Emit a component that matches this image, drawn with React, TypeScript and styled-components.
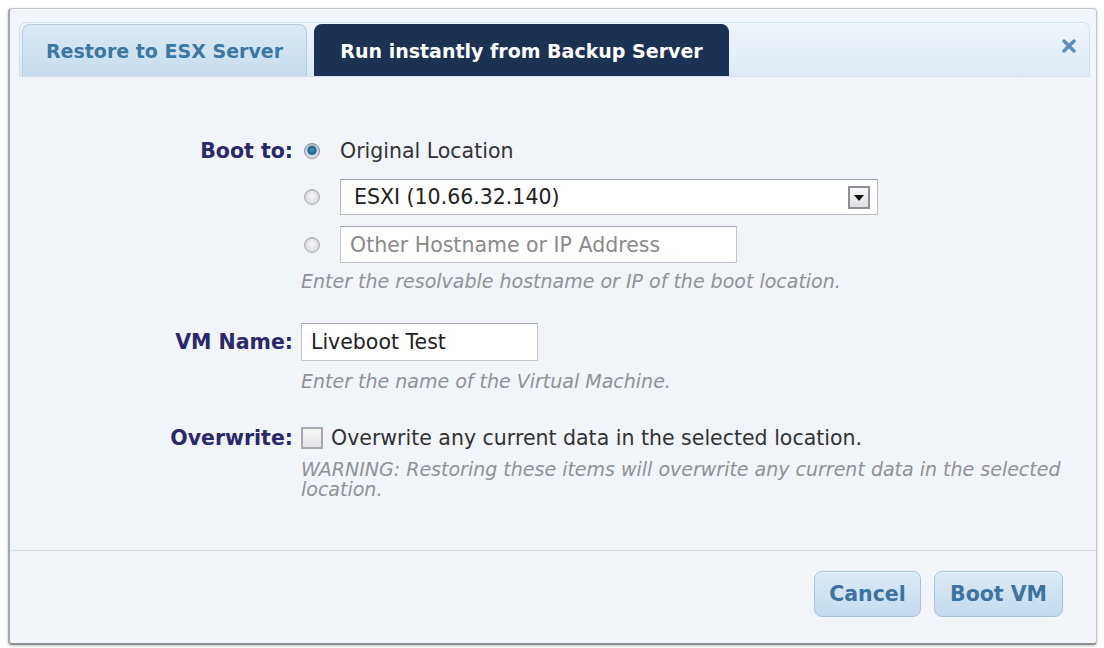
import React from "react";
import styled, { createGlobalStyle } from "styled-components";

const GlobalStyle = createGlobalStyle`
  html, body {
    margin: 0;
    padding: 0;
    background: #ffffff;
  }
  body {
    font-family: "DejaVu Sans", "Liberation Sans", sans-serif;
  }
`;

const Page = styled.div`
  width: 1104px;
  height: 648px;
  padding: 8px 7px 3px 8px;
  box-sizing: border-box;
`;

const Dialog = styled.section`
  height: 100%;
  box-sizing: border-box;
  background: #f1f4f8;
  border: 1px solid #c4c7cb;
  border-left: 2px solid #a4a7ab;
  border-bottom: 2px solid #8e9194;
  border-radius: 4px;
  box-shadow: 0 1px 3px rgba(0, 0, 0, 0.25);
  display: flex;
  flex-direction: column;
`;

const TabBar = styled.div`
  margin: 13px 6px 0 9px;
  height: 54px;
  display: flex;
  align-items: flex-end;
  gap: 7px;
  padding: 0 0 0 2px;
  border: 1px solid #d0deea;
  border-radius: 7px 7px 0 0;
  background: linear-gradient(#eef5fb, #dde9f4);
  position: relative;
`;

const Tab = styled.div<{ $active?: boolean; $w: number }>`
  width: ${(p) => p.$w}px;
  height: 52px;
  display: flex;
  align-items: center;
  justify-content: center;
  border-radius: 8px 8px 0 0;
  font-size: 19px;
  font-weight: bold;
  box-sizing: border-box;
  color: ${(p) => (p.$active ? "#ffffff" : "#3b78a4")};
  background: ${(p) =>
    p.$active ? "#1c3154" : "linear-gradient(#dbeaf5, #c7dcec)"};
  border: 1px solid ${(p) => (p.$active ? "#1c3154" : "#b5cde0")};
  border-bottom: none;
`;

const Close = styled.button`
  position: absolute;
  right: 12px;
  top: 16px;
  width: 16px;
  height: 16px;
  padding: 0;
  border: none;
  background: none;
`;

const Body = styled.div`
  flex: 1;
  padding-top: 61px;
`;

const Form = styled.div`
  display: grid;
  grid-template-columns: 283px 1fr;
  column-gap: 8px;
  align-items: start;
`;

const Label = styled.div<{ $lh: number }>`
  text-align: right;
  font-size: 20.5px;
  font-weight: bold;
  color: #29296b;
  line-height: ${(p) => p.$lh}px;
`;

const Field = styled.div<{ $bottom: number }>`
  display: flex;
  flex-direction: column;
  margin-bottom: ${(p) => p.$bottom}px;
`;

const OptionRow = styled.div<{ $top: number }>`
  display: flex;
  align-items: center;
  min-height: 26px;
  gap: 20px;
  padding-left: 3px;
  margin-top: ${(p) => p.$top}px;
`;

const Radio = styled.span<{ $checked?: boolean }>`
  width: 16px;
  height: 16px;
  flex: none;
  border-radius: 50%;
  box-sizing: border-box;
  border: 1.5px solid ${(p) => (p.$checked ? "#8a9099" : "#a9adb3")};
  background: ${(p) =>
    p.$checked
      ? "radial-gradient(circle at 50% 45%, #4a9acc 0, #1d5f90 4px, #c3c8ce 5px, #eef0f2 8px)"
      : "radial-gradient(circle at 50% 40%, #f6f7f8 0, #d9dce0 8px)"};
  box-shadow: inset 0 1px 1px rgba(0, 0, 0, 0.15);
`;

const OptionText = styled.span`
  font-size: 20.5px;
  line-height: 26px;
  color: #333333;
`;

const Select = styled.div`
  width: 538px;
  height: 36px;
  box-sizing: border-box;
  border: 1px solid #b9bcc0;
  border-top-color: #9ea1a5;
  background: #ffffff;
  display: flex;
  align-items: center;
  justify-content: space-between;
  padding: 0 7px 0 13px;
  font-size: 20.5px;
  color: #222222;
`;

const SelectArrow = styled.span`
  width: 22px;
  height: 23px;
  box-sizing: border-box;
  border: 2px solid #8c8f93;
  background: linear-gradient(#fafafa, #dedfe1);
  display: flex;
  align-items: center;
  justify-content: center;
  &::after {
    content: "";
    border-left: 5px solid transparent;
    border-right: 5px solid transparent;
    border-top: 6px solid #111111;
    margin-top: 2px;
  }
`;

const TextInput = styled.div<{ $w: number; $h: number; $placeholder?: boolean }>`
  width: ${(p) => p.$w}px;
  height: ${(p) => p.$h}px;
  box-sizing: border-box;
  border: 1px solid #c2c5c9;
  border-top-color: #a3a6aa;
  background: #ffffff;
  display: flex;
  align-items: center;
  padding-left: 9px;
  font-size: 20.5px;
  color: ${(p) => (p.$placeholder ? "#8a8a8a" : "#222222")};
`;

const Hint = styled.div<{ $top: number; $lh: number }>`
  margin-top: ${(p) => p.$top}px;
  font-size: 19px;
  font-style: italic;
  color: #8f9297;
  line-height: ${(p) => p.$lh}px;
  max-width: 770px;
`;

const CheckRow = styled.div`
  display: flex;
  align-items: center;
  gap: 8px;
  height: 26px;
`;

const Checkbox = styled.span`
  width: 22px;
  height: 22px;
  flex: none;
  box-sizing: border-box;
  border: 2px solid #a7aaae;
  background: linear-gradient(#f7f7f8, #e2e3e5);
`;

const Divider = styled.hr`
  margin: 0 0 0 1px;
  border: none;
  border-top: 1px solid #d6dbe0;
`;

const Footer = styled.div`
  display: flex;
  justify-content: flex-end;
  gap: 13px;
  padding: 20px 33px 26px 0;
`;

const Button = styled.button<{ $w: number }>`
  width: ${(p) => p.$w}px;
  height: 46px;
  border-radius: 8px;
  border: 1px solid #a6c2d9;
  background: linear-gradient(#dbeaf6, #c4dbec);
  color: #3d73a0;
  font-family: "DejaVu Sans", "Liberation Sans", sans-serif;
  font-size: 20.5px;
  font-weight: bold;
  box-shadow: inset 0 1px 0 rgba(255, 255, 255, 0.6);
`;

const App: React.FC = () => (
  <Page>
    <GlobalStyle />
    <Dialog>
      <TabBar>
        <Tab $w={285}>Restore to ESX Server</Tab>
        <Tab $w={415} $active>
          Run instantly from Backup Server
        </Tab>
        <Close aria-label="Close">
          <svg width="14" height="14" viewBox="0 0 14 14">
            <path d="M2 2 L12 12 M12 2 L2 12" stroke="#5b8fbf" strokeWidth="3.4" strokeLinecap="round" />
          </svg>
        </Close>
      </TabBar>
      <Body>
        <Form>
          <Label $lh={26}>Boot to:</Label>
          <Field $bottom={31}>
            <OptionRow $top={0}>
              <Radio $checked />
              <OptionText>Original Location</OptionText>
            </OptionRow>
            <OptionRow $top={15}>
              <Radio />
              <Select>
                ESXI (10.66.32.140)
                <SelectArrow />
              </Select>
            </OptionRow>
            <OptionRow $top={11}>
              <Radio />
              <TextInput $w={397} $h={37} $placeholder>
                Other Hostname or IP Address
              </TextInput>
            </OptionRow>
            <Hint $top={7} $lh={22}>
              Enter the resolvable hostname or IP of the boot location.
            </Hint>
          </Field>

          <Label $lh={38}>VM Name:</Label>
          <Field $bottom={33}>
            <TextInput $w={237} $h={38}>Liveboot Test</TextInput>
            <Hint $top={9} $lh={22}>
              Enter the name of the Virtual Machine.
            </Hint>
          </Field>

          <Label $lh={26}>Overwrite:</Label>
          <Field $bottom={51}>
            <CheckRow>
              <Checkbox />
              <OptionText>Overwrite any current data in the selected location.</OptionText>
            </CheckRow>
            <Hint $top={8} $lh={20}>
              WARNING: Restoring these items will overwrite any current data in the selected
              location.
            </Hint>
          </Field>
        </Form>
        <Divider />
        <Footer>
          <Button $w={107}>Cancel</Button>
          <Button $w={129}>Boot VM</Button>
        </Footer>
      </Body>
    </Dialog>
  </Page>
);

export default App;
